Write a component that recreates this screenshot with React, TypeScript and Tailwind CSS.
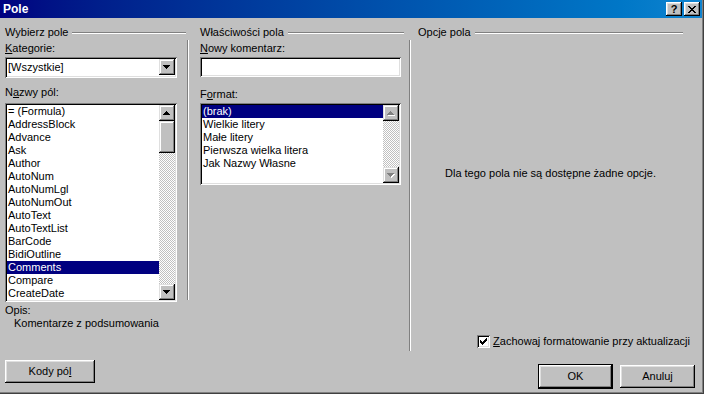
const FONT = "font-['Liberation_Sans',Arial,sans-serif]";

const RAISED =
  'shadow-[inset_-1px_-1px_#000,inset_1px_1px_#fff,inset_-2px_-2px_#808080,inset_2px_2px_#dfdfdf]';
const SCROLL_BTN =
  'shadow-[inset_-1px_-1px_#000,inset_1px_1px_#dfdfdf,inset_-2px_-2px_#808080,inset_2px_2px_#fff]';
const SUNKEN =
  'shadow-[inset_1px_1px_#808080,inset_-1px_-1px_#fff,inset_2px_2px_#000,inset_-2px_-2px_#dfdfdf]';
const CHECKER =
  'bg-[conic-gradient(#fff_25%,#c0c0c0_0_50%,#fff_0_75%,#c0c0c0_0)] bg-[length:2px_2px]';

const FIELDS = [
  '= (Formula)',
  'AddressBlock',
  'Advance',
  'Ask',
  'Author',
  'AutoNum',
  'AutoNumLgl',
  'AutoNumOut',
  'AutoText',
  'AutoTextList',
  'BarCode',
  'BidiOutline',
  'Comments',
  'Compare',
  'CreateDate',
];

const FORMATS = ['(brak)', 'Wielkie litery', 'Małe litery', 'Pierwsza wielka litera', 'Jak Nazwy Własne'];

function Arrow({ up, disabled }: { up?: boolean; disabled?: boolean }) {
  const rows = up ? [3, 2, 1, 0] : [0, 1, 2, 3];
  const bars = rows.map((inset, y) => ({ x: inset, y, w: 7 - inset * 2 }));
  return (
    <svg width="8" height="5" viewBox="0 0 8 5" shapeRendering="crispEdges">
      {disabled &&
        bars.map((b) => <rect key={'s' + b.y} x={b.x + 1} y={b.y + 1} width={b.w} height={1} fill="#fff" />)}
      {bars.map((b) => (
        <rect key={b.y} x={b.x} y={b.y} width={b.w} height={1} fill={disabled ? '#808080' : '#000'} />
      ))}
    </svg>
  );
}

function ScrollButton({ up, disabled }: { up?: boolean; disabled?: boolean }) {
  return (
    <div className={`w-[16px] h-[16px] shrink-0 bg-[#c0c0c0] flex items-center justify-center ${SCROLL_BTN}`}>
      <Arrow up={up} disabled={disabled} />
    </div>
  );
}

function GroupHeader({ title, className = '' }: { title: string; className?: string }) {
  return (
    <div className={`h-[13px] flex items-start gap-[4px] ${className}`}>
      <span className="leading-[13px] whitespace-nowrap">{title}</span>
      <div className="flex-1 mt-[6px] h-[2px] bg-[#808080] border-b border-white" />
    </div>
  );
}

function Label({ children, className = '' }: { children: React.ReactNode; className?: string }) {
  return <div className={`leading-[13px] h-[13px] whitespace-nowrap ${className}`}>{children}</div>;
}

function Button({ children, className = '' }: { children: React.ReactNode; className?: string }) {
  return (
    <div className={`bg-[#c0c0c0] flex items-center justify-center ${RAISED} ${className}`}>
      <span className="leading-[13px]">{children}</span>
    </div>
  );
}

function Checkbox() {
  return (
    <div className={`w-[13px] h-[13px] bg-white flex items-center justify-center ${SUNKEN}`}>
      <svg width="7" height="7" viewBox="0 0 7 7" shapeRendering="crispEdges">
        <rect x="6" y="0" width="1" height="3" fill="#000" />
        <rect x="5" y="1" width="1" height="3" fill="#000" />
        <rect x="4" y="2" width="1" height="3" fill="#000" />
        <rect x="3" y="3" width="1" height="3" fill="#000" />
        <rect x="2" y="4" width="1" height="3" fill="#000" />
        <rect x="1" y="3" width="1" height="3" fill="#000" />
        <rect x="0" y="2" width="1" height="3" fill="#000" />
      </svg>
    </div>
  );
}

function TitleBar() {
  return (
    <div className="h-[18px] shrink-0 flex items-center justify-between pl-[3px] pr-[2px] bg-gradient-to-r from-[#000080] to-[#1084d0]">
      <span className="text-white font-bold text-[12px] leading-[14px]">Pole</span>
      <div className="flex gap-[2px]">
        <div className={`w-[16px] h-[14px] bg-[#c0c0c0] flex items-center justify-center ${RAISED}`}>
          <span className="font-bold text-[11px] leading-[11px] text-black">?</span>
        </div>
        <div className={`w-[16px] h-[14px] bg-[#c0c0c0] flex items-center justify-center ${RAISED}`}>
          <svg width="8" height="7" viewBox="0 0 8 7" shapeRendering="crispEdges">
            {[0, 1, 2, 3, 4, 5, 6].map((i) => (
              <g key={i}>
                <rect x={i} y={i} width="2" height="1" fill="#000" />
                <rect x={6 - i} y={i} width="2" height="1" fill="#000" />
              </g>
            ))}
          </svg>
        </div>
      </div>
    </div>
  );
}

export default function App() {
  return (
    <div className={`w-[704px] h-[394px] bg-[#c0c0c0] border-r border-b border-[#404040] overflow-hidden text-[11px] text-black ${FONT}`}>
      <div className="h-full flex flex-col border-r border-b border-[#808080]">
        <TitleBar />
        <div className="flex flex-1">
          {/* Wybierz pole */}
          <div className="w-[187px] shrink-0 pl-[5px] pr-[1px] flex flex-col">
            <GroupHeader title="Wybierz pole" className="mt-[8px]" />
            <Label className="mt-[3px]">
              <u>K</u>ategorie:
            </Label>
            <div className={`mt-[2px] w-[172px] h-[21px] bg-white p-[2px] flex ${SUNKEN}`}>
              <span className="flex-1 pl-[1px] leading-[17px]">[Wszystkie]</span>
              <ScrollButton />
            </div>
            <Label className="mt-[8px]">
              N<u>a</u>zwy pól:
            </Label>
            <div className={`mt-[4px] w-[172px] h-[199px] bg-white p-[2px] flex ${SUNKEN}`}>
              <div className="flex-1 flex flex-col">
                {FIELDS.map((f) => (
                  <div
                    key={f}
                    className={`h-[13px] leading-[13px] pl-[1px] whitespace-nowrap ${
                      f === 'Comments' ? 'bg-[#000080] text-white' : ''
                    }`}
                  >
                    {f}
                  </div>
                ))}
              </div>
              <div className="w-[16px] flex flex-col">
                <ScrollButton up />
                <div className={`w-[16px] h-[32px] shrink-0 bg-[#c0c0c0] ${SCROLL_BTN}`} />
                <div className={`flex-1 ${CHECKER}`} />
                <ScrollButton />
              </div>
            </div>
            <Label className="mt-[2px]">Opis:</Label>
            <Label className="pl-[9px]">Komentarze z podsumowania</Label>
            <Button className="mt-[30px] w-[90px] h-[23px]">
              Kody pó<u>l</u>
            </Button>
          </div>

          <div className="mt-[22px] h-[260px] w-[2px] shrink-0 border-l border-[#808080] bg-white" />

          {/* Właściwości pola */}
          <div className="w-[220px] shrink-0 pl-[11px] pr-[5px] flex flex-col">
            <GroupHeader title="Właściwości pola" className="mt-[8px]" />
            <Label className="mt-[3px]">
              <u>N</u>owy komentarz:
            </Label>
            <div className={`mt-[2px] w-[201px] h-[20px] bg-white ${SUNKEN}`} />
            <Label className="mt-[11px]">
              F<u>o</u>rmat:
            </Label>
            <div className={`mt-[2px] w-[201px] h-[82px] bg-white p-[2px] flex ${SUNKEN}`}>
              <div className="flex-1 flex flex-col">
                {FORMATS.map((f, i) => (
                  <div
                    key={f}
                    className={`h-[13px] leading-[13px] pl-[1px] whitespace-nowrap ${
                      i === 0 ? 'bg-[#000080] text-white' : ''
                    }`}
                  >
                    {f}
                  </div>
                ))}
              </div>
              <div className="w-[16px] flex flex-col">
                <ScrollButton up disabled />
                <div className={`flex-1 ${CHECKER}`} />
                <ScrollButton disabled />
              </div>
            </div>
          </div>

          <div className="mt-[22px] h-[311px] w-[2px] shrink-0 border-l border-[#808080] bg-white" />

          {/* Opcje pola */}
          <div className="flex-1 pl-[7px] flex flex-col">
            <GroupHeader title="Opcje pola" className="mt-[8px] mr-[19px]" />
            <div className="mt-[128px] mr-[19px] text-center leading-[13px]">
              Dla tego pola nie są dostępne żadne opcje.
            </div>
            <div className="mt-[155px] pr-[12px] flex justify-end items-center gap-[3px]">
              <Checkbox />
              <span className="leading-[13px] whitespace-nowrap">
                <u>Z</u>achowaj formatowanie przy aktualizacji
              </span>
            </div>
            <div className="mt-[16px] pr-[7px] flex justify-end items-start gap-[7px]">
              <div className="w-[75px] h-[25px] border border-black">
                <Button className="w-full h-full">OK</Button>
              </div>
              <Button className="mt-[1px] w-[75px] h-[23px]">Anuluj</Button>
            </div>
          </div>
        </div>
      </div>
    </div>
  );
}
